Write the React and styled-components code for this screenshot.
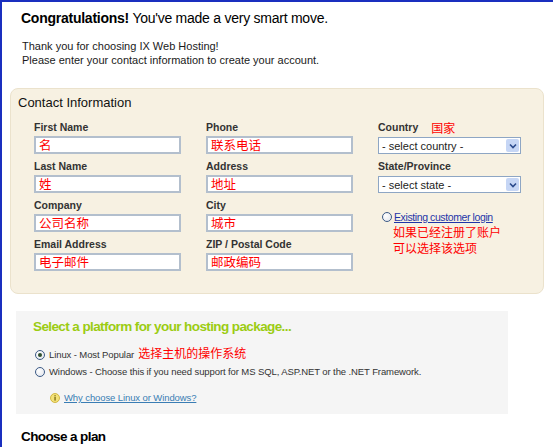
import styled, { createGlobalStyle } from 'styled-components';

const GlobalStyle = createGlobalStyle`
  html, body {
    margin: 0;
    padding: 0;
    background: #ffffff;
    font-family: "Liberation Sans", Arial, "Noto Sans CJK SC", sans-serif;
    color: #000;
  }
`;

const Frame = styled.div`
  box-sizing: border-box;
  min-height: 100vh;
  border-top: 2px solid #1a2fbf;
  border-left: 2px solid #1a2fbf;
  padding-left: 8px;
  overflow: hidden;
`;

const Heading = styled.h1`
  margin: 7px 0 0;
  padding-left: 11px;
  font-size: 14px;
  line-height: 18px;
  font-weight: normal;
  letter-spacing: -0.25px;

  b {
    font-weight: bold;
  }
`;

const Intro = styled.p`
  margin: 12px 0 0;
  padding-left: 12px;
  font-size: 11px;
  line-height: 14px;
  color: #1a1a1a;
`;

const ContactPanel = styled.section`
  box-sizing: border-box;
  width: 534px;
  margin-top: 21px;
  padding: 6px 0 22px;
  background: #f7f1e2;
  border: 1px solid #ebe2cc;
  border-radius: 8px;
`;

const PanelTitle = styled.h2`
  margin: 0 0 10px;
  padding-left: 7px;
  font-size: 13px;
  line-height: 16px;
  font-weight: normal;
  color: #111;
`;

const FieldGrid = styled.div`
  display: grid;
  grid-template-columns: 172px 172px 160px;
  margin-left: 23px;
`;

const Column = styled.div`
  display: flex;
  flex-direction: column;
  gap: 6px;
`;

const Field = styled.div`
  display: flex;
  flex-direction: column;
`;

const Label = styled.label`
  display: flex;
  align-items: center;
  height: 13px;
  margin-bottom: ${(p) => (p.$select ? '3px' : '2px')};
  font-size: 10.5px;
  line-height: 13px;
  font-weight: bold;
  color: #333;
  white-space: nowrap;
`;

const Note = styled.span`
  margin-left: ${(p) => p.$gap || 0}px;
  font-family: "Noto Sans CJK SC", sans-serif;
  font-weight: normal;
  font-size: 12px;
  line-height: 13px;
  letter-spacing: 0;
  color: #ff0000;
`;

const TextBox = styled.div`
  box-sizing: border-box;
  width: 147px;
  height: 18px;
  padding-left: 3px;
  background: #fff;
  border: 2px solid #b3bfcd;
  font-family: "Noto Sans CJK SC", sans-serif;
  font-size: 12.5px;
  line-height: 14px;
  color: #ff0000;
`;

const SelectBox = styled.div`
  box-sizing: border-box;
  display: flex;
  align-items: center;
  justify-content: space-between;
  width: 143px;
  height: 17px;
  padding: 1px 1px 1px 3px;
  background: #fff;
  border: 1px solid #8ea6c4;
  font-size: 11px;
  color: #222;
`;

const Arrow = styled.span`
  display: flex;
  align-items: center;
  justify-content: center;
  width: 13px;
  height: 13px;
  background: #c6d6f5;
  border-radius: 2px;
`;

const Existing = styled.div`
  margin-top: 12px;
  margin-left: 4px;
`;

const RadioLine = styled.div`
  display: flex;
  align-items: center;
  gap: ${(p) => p.$gap || 4}px;
  font-size: 9.5px;
  letter-spacing: -0.1px;
  line-height: ${(p) => p.$lh || 17}px;
  color: #333;
  white-space: nowrap;
`;

const Radio = styled.span`
  box-sizing: border-box;
  display: inline-flex;
  align-items: center;
  justify-content: center;
  width: 10px;
  height: 10px;
  border-radius: 50%;
  border: 1px solid #3c5a86;
  background: radial-gradient(circle at 35% 35%, #ffffff, #dfe3ea);

  &::after {
    content: '';
    display: ${(p) => (p.$checked ? 'block' : 'none')};
    width: 4px;
    height: 4px;
    border-radius: 50%;
    background: #2f4f2f;
  }
`;

const LoginLink = styled.a`
  font-size: 10.5px;
  letter-spacing: -0.4px;
  color: #1f35a8;
  text-decoration: underline;
`;

const RedBlock = styled.div`
  margin-left: 11px;
  margin-top: 1px;
  font-family: "Noto Sans CJK SC", sans-serif;
  font-size: 12px;
  line-height: 16px;
  color: #ff0000;
`;

const PlatformPanel = styled.section`
  box-sizing: border-box;
  width: 492px;
  margin: 17px 0 0 6px;
  padding: 7px 0 8px 17px;
  background: #f5f5f5;
`;

const GreenTitle = styled.h3`
  margin: 0 0 11px;
  font-size: 13.5px;
  line-height: 17px;
  font-weight: bold;
  letter-spacing: -0.6px;
  color: #9bcc12;
`;

const Options = styled.div`
  padding-left: 2px;
`;

const HelpRow = styled.div`
  display: flex;
  align-items: center;
  gap: 4px;
  margin-top: 10px;
  padding-left: 17px;
  line-height: 16px;
`;

const HelpLink = styled.a`
  font-size: 9.5px;
  letter-spacing: -0.1px;
  color: #3a7db4;
  text-decoration: underline;
`;

const PlanTitle = styled.h2`
  margin: 14px 0 0;
  padding-left: 11px;
  font-size: 13.5px;
  line-height: 18px;
  font-weight: bold;
  letter-spacing: -0.6px;
`;

function InfoIcon() {
  return (
    <svg width="10" height="10" viewBox="0 0 10 10">
      <circle cx="5" cy="5" r="4.5" fill="#f3e27a" stroke="#c9ab2a" strokeWidth="0.8" />
      <rect x="4.4" y="4" width="1.3" height="3.6" fill="#7a6a10" />
      <rect x="4.4" y="2.2" width="1.3" height="1.2" fill="#7a6a10" />
    </svg>
  );
}

function Chevron() {
  return (
    <svg width="8" height="6" viewBox="0 0 8 6">
      <path d="M1 1.5 L4 4.5 L7 1.5" fill="none" stroke="#2b4a8c" strokeWidth="1.6" />
    </svg>
  );
}

const leftFields = [
  ['First Name', '名'],
  ['Last Name', '姓'],
  ['Company', '公司名称'],
  ['Email Address', '电子邮件'],
];

const midFields = [
  ['Phone', '联系电话'],
  ['Address', '地址'],
  ['City', '城市'],
  ['ZIP / Postal Code', '邮政编码'],
];

function FieldColumn({ fields }) {
  return (
    <Column>
      {fields.map(([label, value]) => (
        <Field key={label}>
          <Label>{label}</Label>
          <TextBox>{value}</TextBox>
        </Field>
      ))}
    </Column>
  );
}

export default function App() {
  return (
    <>
      <GlobalStyle />
      <Frame>
        <Heading>
          <b>Congratulations!</b>
          {' '}
          You&apos;ve made a very smart move.
        </Heading>
        <Intro>
          Thank you for choosing IX Web Hosting!
          <br />
          Please enter your contact information to create your account.
        </Intro>

        <ContactPanel>
          <PanelTitle>Contact Information</PanelTitle>
          <FieldGrid>
            <FieldColumn fields={leftFields} />
            <FieldColumn fields={midFields} />
            <Column>
              <Field>
                <Label $select>
                  Country
                  <Note $gap={13}>国家</Note>
                </Label>
                <SelectBox>
                  - select country -
                  <Arrow><Chevron /></Arrow>
                </SelectBox>
              </Field>
              <Field>
                <Label $select>State/Province</Label>
                <SelectBox>
                  - select state -
                  <Arrow><Chevron /></Arrow>
                </SelectBox>
              </Field>
              <Existing>
                <RadioLine $gap={2} $lh={12}>
                  <Radio />
                  <LoginLink href="#login">Existing customer login</LoginLink>
                </RadioLine>
                <RedBlock>
                  如果已经注册了账户
                  <br />
                  可以选择该选项
                </RedBlock>
              </Existing>
            </Column>
          </FieldGrid>
        </ContactPanel>

        <PlatformPanel>
          <GreenTitle>Select a platform for your hosting package...</GreenTitle>
          <Options>
            <RadioLine>
              <Radio $checked />
              <span>
                Linux - Most Popular
                <Note $gap={4}>选择主机的操作系统</Note>
              </span>
            </RadioLine>
            <RadioLine>
              <Radio />
              <span>Windows - Choose this if you need support for MS SQL, ASP.NET or the .NET Framework.</span>
            </RadioLine>
          </Options>
          <HelpRow>
            <InfoIcon />
            <HelpLink href="#why">Why choose Linux or Windows?</HelpLink>
          </HelpRow>
        </PlatformPanel>

        <PlanTitle>Choose a plan</PlanTitle>
      </Frame>
    </>
  );
}
